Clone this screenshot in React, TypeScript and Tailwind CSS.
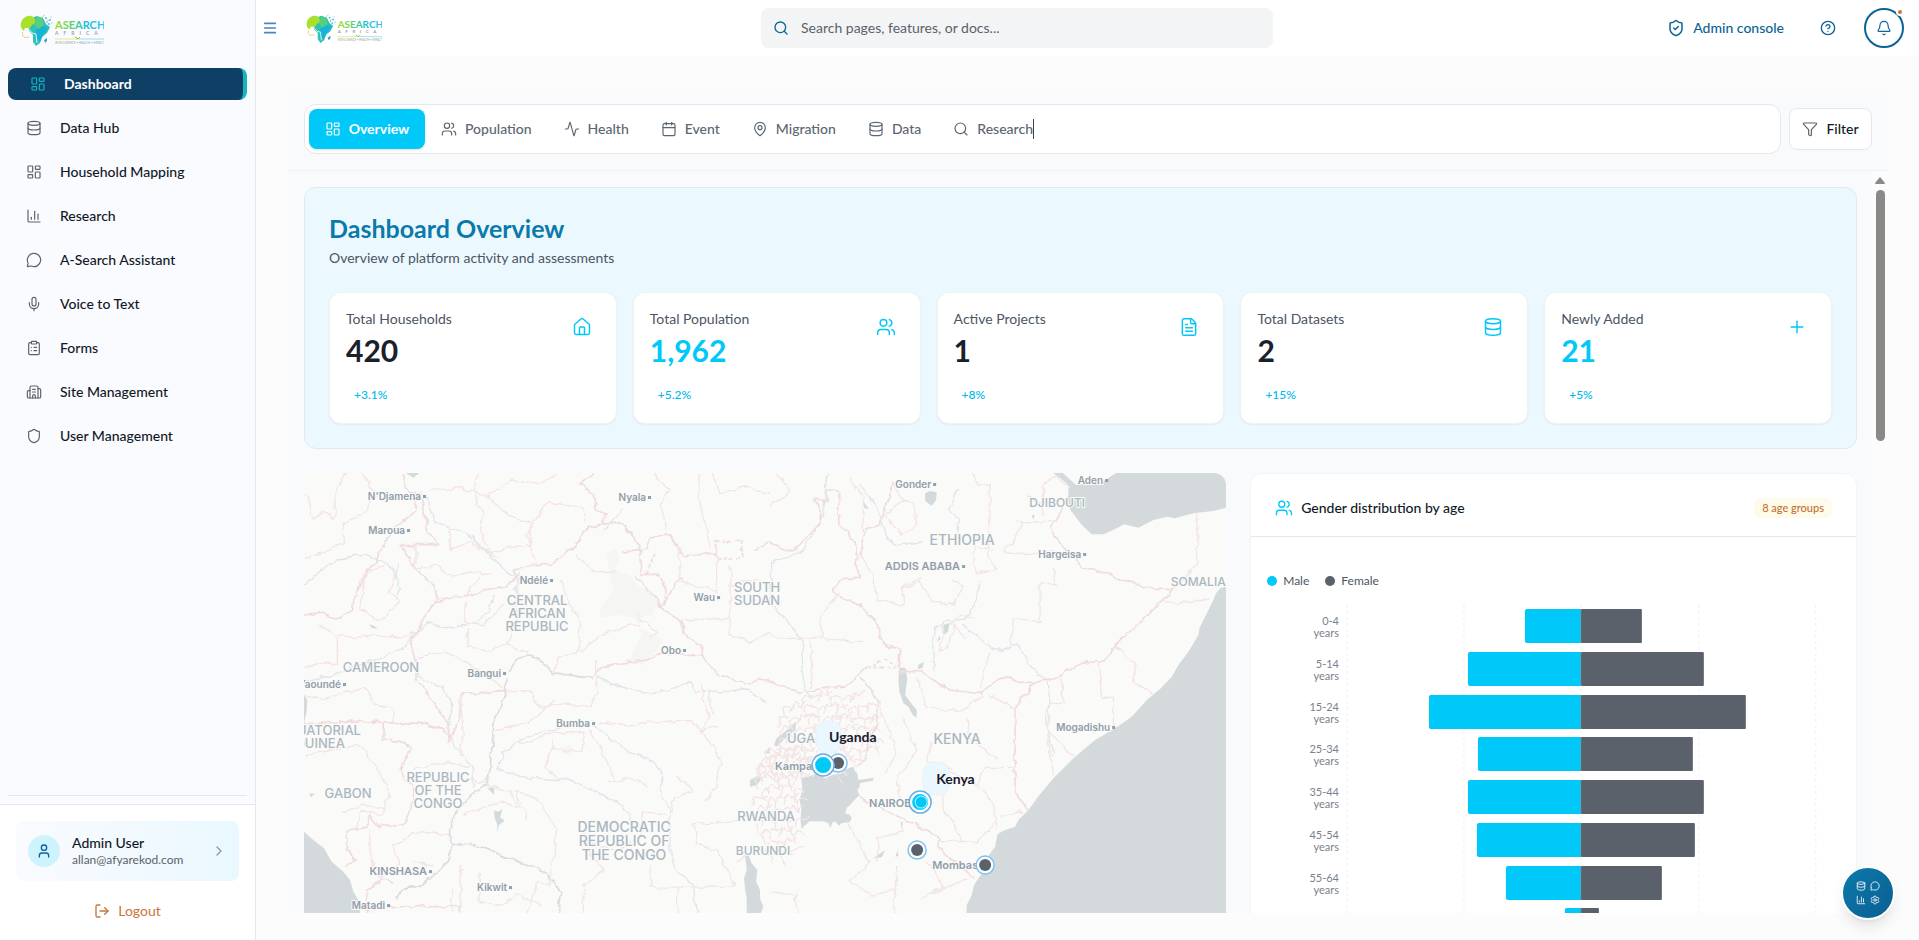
import type { LucideIcon } from 'lucide-react';
import {
    Activity, Bell, Building2, Calendar, ChartColumn, ChevronRight, CircleQuestionMark, ClipboardList, Database,
    FileText, Funnel, House, LayoutDashboard, LogOut, MapPin, Menu, MessageCircle, Mic, Plus, Search,
    Settings, Shield, ShieldCheck, User, Users,
} from 'lucide-react';

const navItems: { label: string; icon: LucideIcon }[] = [
    { label: 'Data Hub', icon: Database },
    { label: 'Household Mapping', icon: LayoutDashboard },
    { label: 'Research', icon: ChartColumn },
    { label: 'A-Search Assistant', icon: MessageCircle },
    { label: 'Voice to Text', icon: Mic },
    { label: 'Forms', icon: ClipboardList },
    { label: 'Site Management', icon: Building2 },
    { label: 'User Management', icon: Shield },
];

const tabs: { label: string; icon: LucideIcon }[] = [
    { label: 'Population', icon: Users },
    { label: 'Health', icon: Activity },
    { label: 'Event', icon: Calendar },
    { label: 'Migration', icon: MapPin },
    { label: 'Data', icon: Database },
];

const stats: { label: string; value: string; change: string; icon: LucideIcon; accent?: boolean }[] = [
    { label: 'Total Households', value: '420', change: '+3.1%', icon: House },
    { label: 'Total Population', value: '1,962', change: '+5.2%', icon: Users, accent: true },
    { label: 'Active Projects', value: '1', change: '+8%', icon: FileText },
    { label: 'Total Datasets', value: '2', change: '+15%', icon: Database },
    { label: 'Newly Added', value: '21', change: '+5%', icon: Plus, accent: true },
];

const ageGroups = [
    { range: '0-4', male: 56, female: 61 },
    { range: '5-14', male: 113, female: 123 },
    { range: '15-24', male: 152, female: 165 },
    { range: '25-34', male: 103, female: 112 },
    { range: '35-44', male: 113, female: 123 },
    { range: '45-54', male: 104, female: 114 },
    { range: '55-64', male: 75, female: 81 },
    { range: '65+', male: 16, female: 18 },
];

// city dots, label sits to the left
const cities = [
    { name: "N'Djamena", x: 120, y: 23 },
    { name: 'Maroua', x: 104, y: 57 },
    { name: 'Nyala', x: 345, y: 24 },
    { name: 'Ndélé', x: 247, y: 107 },
    { name: 'Wau', x: 414, y: 124 },
    { name: 'Obo', x: 380, y: 177 },
    { name: 'Bangui', x: 200, y: 200 },
    { name: 'Yaoundé', x: 40, y: 211 },
    { name: 'Bumba', x: 289, y: 250 },
    { name: 'Kikwit', x: 206, y: 414 },
    { name: 'Matadi', x: 84, y: 432 },
    { name: 'Gonder', x: 630, y: 11 },
    { name: 'Aden', x: 802, y: 7 },
    { name: 'Hargeisa', x: 780, y: 81 },
    { name: 'Mogadishu', x: 809, y: 254 },
];

const capitals = [
    { name: 'KINSHASA', x: 126, y: 398 },
    { name: 'ADDIS ABABA', x: 659, y: 93 },
];

const countries = [
    { lines: ['CENTRAL', 'AFRICAN', 'REPUBLIC'], x: 233, y: 132, size: 13 },
    { lines: ['CAMEROON'], x: 77, y: 199, size: 13 },
    { lines: ['EQUATORIAL', 'GUINEA'], x: 16, y: 262, size: 13 },
    { lines: ['REPUBLIC', 'OF THE', 'CONGO'], x: 134, y: 309, size: 13 },
    { lines: ['GABON'], x: 44, y: 325, size: 13 },
    { lines: ['DEMOCRATIC', 'REPUBLIC OF', 'THE CONGO'], x: 320, y: 359, size: 14 },
    { lines: ['SOUTH', 'SUDAN'], x: 453, y: 119, size: 13 },
    { lines: ['ETHIOPIA'], x: 658, y: 72, size: 14 },
    { lines: ['DJIBOUTI'], x: 753, y: 34, size: 12 },
    { lines: ['SOMALIA'], x: 894, y: 113, size: 12 },
    { lines: ['KENYA'], x: 653, y: 271, size: 14 },
    { lines: ['UGA'], x: 497, y: 270, size: 13 },
    { lines: ['RWANDA'], x: 462, y: 348, size: 13 },
    { lines: ['BURUNDI'], x: 459, y: 382, size: 12 },
];

// small districts, drawn as a jittered brick lattice inside an ellipse
function districtPath(cx: number, cy: number, rx: number, ry: number, step: number) {
    let d = '';
    for (let row = 0, y = cy - ry; y <= cy + ry; y += step, row++) {
        for (let x = cx - rx + (row % 2) * (step / 2); x <= cx + rx; x += step) {
            if (((x - cx) / rx) ** 2 + ((y - cy) / ry) ** 2 > 1) continue;
            const j = Math.round(Math.sin(x * 12.9 + y * 78.2) * step * 0.4);
            d += `M${Math.round(x)} ${Math.round(y + j)}l${step / 2} ${-j}l${step / 2} ${j}M${Math.round(x)} ${Math.round(y + j)}l${j} ${step}`;
        }
    }
    return d;
}

function Logo({ className }: { className: string }) {
    return (
        <svg viewBox="0 0 84 32" className={className} role="img" aria-label="ASearch Africa">
            <defs>
                <linearGradient id="word" x1="0" x2="1">
                    <stop offset="0" stopColor="#a6dc2c" />
                    <stop offset="0.4" stopColor="#4fcf7b" />
                    <stop offset="0.6" stopColor="#22bfd0" />
                    <stop offset="1" stopColor="#2fc4f5" />
                </linearGradient>
            </defs>
            <path d="M9 5l8-3 6 2 3 6 4 3-3 6-5 4-2 6-4 3-3-4 0-7-4-4-1-7z" fill="#2fc3b4" />
            <path d="M1 9C2 4 7 1 11 2c4 1 5 4 4 7l-3 2-2 3-5 0-1 3C1 15 0 12 1 9z" fill="#a9e02b" />
            <path d="M17 3l5 1 2 7-6 4-4-5z" fill="#59cf7d" />
            <path d="M16 16l8-4 4 2-5 7-3 7-4-5z" fill="#17b2dc" />
            <path d="M8 14l4 5 4 1 1 9" fill="none" stroke="#d9f5ef" strokeWidth="1" />
            <path d="M3 18c-2 3 1 7 6 5M22 3l3-2M27 6l2 1" fill="none" stroke="#f4c862" strokeWidth="1" />
            <path d="M24 26l3-2 0 3-2 2z" fill="#3b9fe0" />
            <g fill="#45bdf1">
                <circle cx="26" cy="4" r="1" /><circle cx="30" cy="6" r="1" /><circle cx="29" cy="10" r="1" />
                <circle cx="32" cy="9" r="0.6" /><circle cx="27" cy="8" r="0.8" /><circle cx="31" cy="3" r="0.6" />
            </g>
            <text x="35" y="15" fill="url(#word)" fontSize="11" fontWeight="700">ASEARCH</text>
            <text x="35" y="21" fill="#9ba3ab" fontSize="5" fontWeight="700" letterSpacing="5">AFRICA</text>
            <path d="M35 25h24" stroke="#dbe86a" strokeWidth="0.8" />
            <path d="M59 25h25" stroke="#7fd6ee" strokeWidth="0.8" />
            <path d="M55 23l3 2 2-2" stroke="#79c943" strokeWidth="1" fill="none" />
            <text x="35" y="30" fill="#9ba3ab" fontSize="3">INTELLIGENCE • HEALTH • IMPACT</text>
        </svg>
    );
}

function Sidebar() {
    return (
        <aside className="flex w-64 shrink-0 flex-col border-r border-[#e5e7eb] bg-[#fafbfe]">
            <div className="flex h-[60px] items-center px-5">
                <Logo className="h-8 w-[84px]" />
            </div>
            <nav className="mx-2 flex flex-1 flex-col gap-3 border-b border-[#e5e7eb] pt-2">
                <a href="#dashboard" className="flex h-8 items-center gap-[18px] rounded-lg border-r-4 border-[#14b5c1] bg-[#0d4064] px-[22px] text-sm font-bold text-white">
                    <LayoutDashboard size={16} strokeWidth={1.75} className="text-[#14b5c1]" />
                    Dashboard
                </a>
                {navItems.map(({ label, icon: Icon }) => (
                    <a key={label} href="#" className="flex h-8 items-center gap-[18px] px-[18px] text-sm font-medium text-[#111827]">
                        <Icon size={16} strokeWidth={1.75} className="text-[#5b616a]" />
                        {label}
                    </a>
                ))}
            </nav>
            <div className="mt-2 flex flex-col gap-3 border-t border-[#e5e7eb] bg-white p-4 pb-[11px]">
                <button className="flex h-[60px] items-center gap-3 rounded-lg bg-linear-to-r from-[#fafbfe] to-[#e9f8ff] px-3 text-left">
                    <span className="flex size-8 items-center justify-center rounded-full bg-[#cdf3fd] text-[#0b6396]">
                        <User size={16} />
                    </span>
                    <span className="flex-1">
                        <span className="block text-sm leading-[18px] font-medium text-[#111827]">Admin User</span>
                        <span className="block text-xs leading-4 text-[#5b616a]">allan@afyarekod.com</span>
                    </span>
                    <ChevronRight size={16} className="text-[#9097a1]" />
                </button>
                <button className="flex h-9 items-center justify-center gap-2 text-sm text-[#c97539]">
                    <LogOut size={16} />
                    Logout
                </button>
            </div>
        </aside>
    );
}

function Header() {
    return (
        <header className="flex h-14 shrink-0 items-center bg-white pr-[15px] pl-1.5">
            <div className="flex w-[499px] items-center gap-7">
                <button aria-label="Toggle menu" className="text-[#4a83c0]"><Menu size={16} strokeWidth={2.5} /></button>
                <Logo className="h-[29px] w-[76px]" />
            </div>
            <label className="flex h-10 w-lg items-center gap-3 rounded-lg bg-[#f3f4f6] px-3 text-[#0b6396]">
                <Search size={16} />
                <input type="search" aria-label="Search" placeholder="Search pages, features, or docs..." className="flex-1 bg-transparent text-sm text-[#111827] outline-none placeholder:text-[#5b616a]" />
            </label>
            <div className="flex flex-1 items-center justify-end text-[#0b6396]">
                <a href="#admin" className="flex items-center gap-2 text-sm font-medium"><ShieldCheck size={18} />Admin console</a>
                <button aria-label="Help" className="ml-6 flex size-10 items-center justify-center"><CircleQuestionMark size={16} /></button>
                <button aria-label="Notifications" className="relative ml-4 flex size-10 items-center justify-center rounded-full border-2 border-[#0b6396]">
                    <Bell size={16} strokeWidth={1.75} />
                    <span className="absolute -top-0.5 -right-0.5 size-2 rounded-full border-2 border-white bg-[#c97539]" />
                </button>
            </div>
        </header>
    );
}

function TabBar() {
    return (
        <div className="flex items-center gap-2 border-b border-[#f1f2f5] p-4">
            <div role="tablist" className="flex h-[50px] flex-1 items-center rounded-xl border border-[#e5e7eb] bg-white p-1">
                <button role="tab" aria-selected="true" className="flex h-10 w-[116px] items-center justify-center gap-2 rounded-lg bg-[#00c8f8] text-sm font-bold text-white shadow-sm">
                    <LayoutDashboard size={16} strokeWidth={1.75} />
                    Overview
                </button>
                {tabs.map(({ label, icon: Icon }) => (
                    <button key={label} role="tab" className="flex h-10 items-center gap-2 px-4 text-sm font-medium text-[#5b6673]">
                        <Icon size={16} strokeWidth={1.75} />
                        {label}
                    </button>
                ))}
                <button role="tab" className="flex h-10 items-center gap-2 px-4 text-sm font-medium text-[#5b6673]">
                    <Search size={16} strokeWidth={1.75} />
                    <span className="border-r border-[#374151]">Research</span>
                </button>
            </div>
            <button className="flex h-[42px] w-[83px] items-center justify-center gap-2 rounded-lg border border-[#e5e7eb] bg-white text-sm font-medium text-[#111827]">
                <Funnel size={16} strokeWidth={1.75} className="text-[#5b616a]" />
                Filter
            </button>
        </div>
    );
}

function Overview() {
    return (
        <section className="rounded-xl border border-[#e0e9ef] bg-[#ebf9ff] p-6">
            <h1 className="text-[25px] leading-8 font-bold text-[#0b7aab]">Dashboard Overview</h1>
            <p className="mt-1 text-sm text-[#4b5563]">Overview of platform activity and assessments</p>
            <div className="mt-6 grid grid-cols-5 gap-4">
                {stats.map(({ label, value, change, icon: Icon, accent }) => (
                    <div key={label} className="flex h-[132px] justify-between rounded-xl border border-[#f0f3f6] bg-white p-4 shadow-xs">
                        <div>
                            <div className="text-sm text-[#4b5563]">{label}</div>
                            <div className={accent ? 'mt-[3px] text-3xl font-bold text-[#00c8f8]' : 'mt-[3px] text-3xl font-bold text-[#1a202c]'}>{value}</div>
                            <div className="mt-[15px] px-2 py-1 text-xs font-medium text-[#00b8ec]">{change}</div>
                        </div>
                        <div className="p-2 text-[#00c8f8]"><Icon size={20} strokeWidth={1.75} /></div>
                    </div>
                ))}
            </div>
        </section>
    );
}

function Pin({ x, y, big }: { x: number; y: number; big?: boolean }) {
    return (
        <g>
            <circle cx={x} cy={y} r={big ? 11 : 9} fill="#fff" stroke={big ? '#69ade6' : '#7cc4f0'} strokeWidth="1.5" />
            <circle cx={x} cy={y} r={big ? 8 : 6} fill={big ? '#00c8f8' : '#5b616a'} />
        </g>
    );
}

function RegionMap() {
    return (
        <div className="col-span-3 h-[520px] overflow-hidden rounded-xl bg-[#fafaf8]">
            <svg viewBox="0 0 922 520" preserveAspectRatio="xMidYMin slice" className="size-full" role="img" aria-label="Map of project sites in East and Central Africa">
                <defs>
                    <filter id="rough" x="-5%" y="-5%" width="110%" height="110%">
                        <feTurbulence type="fractalNoise" baseFrequency="0.09" numOctaves="3" seed="4" />
                        <feDisplacementMap in="SourceGraphic" scale="7" xChannelSelector="R" yChannelSelector="G" />
                    </filter>
                </defs>
                {/* traced at three units to the pixel */}
                <g transform="translate(-4 -8) scale(0.3333)">
                    <g fill="#f5f5f4">
                        <path d="M920 270l25-20 15 25-15 40 50 20 20 30 40 10 20 35-20 40-30 5-10 30 60 30 15 15-30 40-30 30-45-5 40-90-20-45-45-10-60 10 0-30 40-50z" />
                        <path d="M780 850l30-10 15 15-20 22z" />
                    </g>
                    <g fill="#d4dadc">
                        <path d="M12 1100l28 25 32 25 23 40 35 30 20 25 10 35 18 30 2 34v300H12zM12 690l10 15-2 35-8 35z" />
                        <path d="M1335 1170l10 0 10 25 17 20-4 35 12 25 0 25 10 25-10 25 20 60-60 0 0-110-5-30-3-30 8-25zM1350 945l25-13 13 6-18 22-20 5zM1392 865l18-20 0 20z" />
                        <path d="M582 1036l12 4 13-7-7 24 14 10-18 14-4 26 0-28-8-20zM562 968l20 0 0 22zM208 478l15 5 10 10-18-5zM318 24h40l-18 14zM28 985l17 2-14 10z" />
                        <g transform="translate(1410 0)">
                            <path d="M1368 365l-18 5-12 15-8 20-25 50-17 35-3 20-30 50-30 40-20 35-35 37-40 33-45 50-50 35-60 35-65 55-60 60-42 50-33 45-30 30-10 20-35 12-18 11-7 37-25 35-10 40-15 20-13 20-7 30-15 30-5 200h783z" />
                            <path d="M850 24l20 16 25 20 0 30-10 20 20 30 30 40 30 28 35 0 30-13 32-17 43 10 45-23 40-10 25 5 55-15 60-7 38-10V24h-330l-40 26-80 10-40-36z" />
                            <path d="M115 935l25-10 25 15 22-10 28-5 12-12 23-8 3 12 9 8 3 20 18-2 27-5-2 10-20 2-18 5-2 12-6 8 6 15-12 12-16 18-10 8-5 17 14 4 6 10-5 12-25 3-8 8-12-13-7 3-8 17-5-15-15-5-30 0-12 0-8 8-8 7-7 8-4-28 3-30-5-30 8-30-3-35z" />
                            <path d="M388 608l17 0 7 32-7 50 15 20 20 25 0 23-12-8-13-25-15-10-12-35-3-35zM78 770l-2 25-36 30-20 20-8-5 8-20 30-25zM465 85l15-7 20 4-2 23-13 17-20-14zM520 480l18-6-4 26-14 10zM500 530l8-18 4 10zM445 600l16-10-4 20-14 2zM310 1180l35-25-10 22zM375 1175l8-18 2 16zM392 1070l6 0-2 30zM282 112l14 20-14-4zM784 150l10 0-4 14z" />
                        </g>
                    </g>
                </g>
                <g filter="url(#rough)">
                    <g transform="translate(-4 -8) scale(0.3333)" fill="none" strokeLinejoin="round">
                        <g stroke="#e1e5ea" strokeWidth="4">
                            <path d="M362 80l28 30 10 55 50 25 50 15 60 60 50 50 40 20M12 360l40-35 60-40 80-15 60 20 30 30 20 50-20 40M655 320l-10 60 20 10M330 510l60-40 30 20 80-10 60-30 25-60M12 650l80-20 140-50 80-30 40-50M350 630l80 40 25 50-10 60M445 810l40 60 35 40 0 60M890 640l60 20 110 25 80-20 30-15 20 30 150-5 60 40M880 780l90 70 90 40 25 30 0 70 25 50 0 120 20 60 50 40 10 104M590 910l100 30 120 5 110 50 60 40 15 50M590 915l20-55 80-50 90-20" />
                            <path stroke="#dadcdf" strokeWidth="5" d="M625 620l25-35 40-12 40 20 30 30 120 18M617 640l0 50-35 80-10 120-15 70-60 40-45 80 0 100-35 40-50 40-60 10-25 30M455 1135l70 5 70 25 140 55 50 60-10 64" />
                            <path d="M1580 25l-10 130-60 100-100 40M1415 290l-5 120 60 70 40 50-5 110 30 60M1900 615l-2-120 40-25 60-5 30-60 10-60M1990 480l90 75 40 0 30-20 50 80 40 30 10 60-15 60 25 110M1975 75l-30 60 30 25 0 60M1680 60l60 90 20 70 30 20 80-10" />
                        </g>
                        <g stroke="#f0dcde" strokeWidth="5">
                            <path d="M310 24l8 45 45 30 15 60 0 30 35 50-110 0 35 60 60 60 15 40-30 40-40 70-10 30 15 60 0 40 55 80 20 25 20 30 5 60M347 90l0 45-60 50-35 50-25 55-45 60-25 80-50 35-40-20-55 5-12 15" />
                            <path d="M405 410l60-10 45-10 40-15 70-10 30-30-10-20 60-12 50-5 60-45 60-65 50-15 45 5 30 30 30 50-5 70 55 0 20 50-10 40 60-80M885 24l-45 30 40 35 5 40 30 20-5 30M963 262l75-12 18-35 55-5 20 40 30 22 90-8M1360 255l50-20M1005 330l60 60 10 30 70 50 5 40 55 30 5 40 50 50 90 30 30-20 30 10M1210 570l-130-5-40 20-80 10-50 10-28 30M12 775l108 0 0-8 130 6 110 2 60 15 28 20 30-50 5-75 135-5M250 775l-2 50 70 5 15 25-35 60 40 50-5 70-15 40-80 10-30-35-10 40-60 5 5 60 20 30-20 20M200 1344l0-70 50-30 30 10M265 1325l215 0 0 19" />
                        </g>
                        <g stroke="#f0dcde" strokeWidth="5" transform="translate(1410 0)">
                            <path d="M0 230l40 25 35 0 75-80 0-55-20-17 38 0 3-25 35 0 0 100 50 55 10 110-55 0-20 40 80 40 55 55 0 35 25 30 40 10 0 60M390 620l60 0 90 55 95 12 30-30 55-25 25 20 50 0 65-15 60-40 85-10 35-50 170-160 0 0-65-2-120-45-90-25-80-90-10-30 40-60M795 655l-60 75 0 250 40 55M265 995l250 125-10 30 110 90M120 680l60-20 45 10 60-60M270 640l50 60 0 80-30 60 0 40-30 25M370 50l-40 130-40 10-20 80M0 650l40 20 60 10" />
                            <path strokeDasharray="12 8" d="M285 608l60-25 40 25zM-165 227l80 0 0 55-75 0zM-370 330l25-70" />
                        </g>
                        <g stroke="#f3e4e5" strokeWidth="4">
                            <path d="M140 24l-35 60 0 80-40-25-30 30-10-60-13-20M180 24l50 60-40 60-60 30 0 60-60 30-58 10M12 610l50-20 50 10 0-80-50-40M115 515l210 0M300 300l-30 80 30 30-60 60-60-40 10-100 60-30M345 230l0 80 60-10 50 40 60-20 60 10M450 190l0 60 60-20 80 50M400 400l90 0 50-60M500 410l-10 60 60 10 60-60M505 490l0 50 60 20 50-20M350 580l90-20 60 30 110 80M540 24l-20 60 30 60-10 60 30 60 120-30 0-60-80-30-40-50M390 80l80-15 90 30 80-50 80 10 50-30M710 300l-30-90 60-100 110 20 10 40M820 260l60 60 70 0M650 350l0 130-30 60 60 20 0 20M780 340l20 60 40 80-5 80-60 20-20 50M840 560l60-50 90-30 30 0M1050 520l20-20-60-50M970 130l-60 70M1060 24l50 50-30 50 20 80M1200 24l0 90 30 140M1140 250l0 100 110 30 0-130M1150 465l140-5 0-160M1290 460l0 50 60 20 60-30M1290 360l80-20" />
                            <path d="M12 690l60 10 80-20 50-10 20 50 60 10 0 40M480 690l10 120-10 60M620 680l70 0 30 50 60-15 90 10 20-40 0-100M585 795l100-20 80-70M660 820l0 20 100-40 0 40-20 60M765 800l90 0-10 60-90-10-20 60 40 30M870 800l50 80 20 60M890 770l100 10 60-10 130 0 20 30 60-20M1200 660l30 100-30 40 40 40 20 50-10 80-40 40M1130 930l50 50-60 20-10 50M1220 670l20 80M12 870l60-10 110-20 60 90 30 60-30 60-60-10-10 60M130 1040l60-20 60 10M510 910l-60-20-110 20M510 940l120 40 30 50-60-20-110 40M680 1060l-30-80 60 20 60 90-10 100-10 70-40-10-30 120M840 1130l110 30 80-60 0-60 70 10M870 1160l40 60-60 40 0 84M1050 1200l0 66 260 0-60-110-60-20-10-60 130-10M1130 1266l0 78M480 1200l0 144M455 1270l0 74M540 1220l0 90 60 10 50-30 70 30M210 1100l0 80 30 60 60-40-20-60 80-40 90 10M340 1190l60 10M920 950l60-10 60 20M1310 1190l60-40 40 10M1240 24l20 60 80-20 70 20" />
                        </g>
                        <g stroke="#f3e4e5" strokeWidth="4" transform="translate(1410 0)">
                            <path d="M20 24l40 60-60 40M240 40l40 60 0 100M370 50l30 60-60 40 60 60 40-30-10-60-40-20M610 24l10 40 40-10 0 100-10 120 30 40-60 10-10-80 60 10M760 170l-30 60-30 30 50 10 100-10M740 170l120 0M850 310l10 50-50-10 0 120-80-10-5 80M550 350l30 10-30 60-60-10-40-60-60 20M270 270l40 60 10 80 80 10 0-60 60-20M210 380l-60 80 5 60M0 500l20 20 130 0 130 10M125 530l0 140M540 480l30-30 40 10M520 480l-10 80 30-20 10-60 40 40M660 560l-30 110M440 640l30 90 100 10 70-50M590 760l10 60 80 60M735 730l0 60M660 690l70 40M870 640l10 75-40 0-10 90 20 120M830 790l80 90M985 590l10 110 35 0 0 80M1035 545l60 50 0 60 55 35M1180 410l80 5 60-10M1280 150l0 150-70 80M730 910l-90 0-20 50 50 50 10 80M690 1055l70-20M620 960l-110-60 10 130 60 100 40 0 60-60M400 760l40 100-60 80 10 60M480 830l-10 60 80 20M320 700l60 160-30 60M510 1130l70 0M400 1100l-80 20 0 70M470 1190l60 80-80 30M380 1200l-10 144M600 1240l-110 40M0 1280l80 10 0 60M230 1070l70 120-60 60M240 1250l60 40 80-20M100 1150l-100 20M850 30l-30 30 0 90M820 120l-50-30M850 30l50 40" />
                            <path d={districtPath(170, 790, 160, 130, 32)} />
                            <path d={districtPath(40, 890, 90, 60, 24)} />
                            <path d={districtPath(20, 1010, 80, 170, 32)} />
                        </g>
                    </g>
                </g>
                <g fontWeight="500" fill="#abb7c0" textAnchor="middle" stroke="#fafaf8" strokeWidth="2" paintOrder="stroke" className="font-[Inter,sans-serif]">
                    {countries.map(({ lines, x, y, size }) => lines.map((line, i) => (
                        <text key={line + x} x={x} y={y + i * (size > 13 ? 14 : 13)} fontSize={size}>{line}</text>
                    )))}
                </g>
                <g fontSize="10" fontWeight="600" fill="#929eaa" stroke="#fafaf8" strokeWidth="2" paintOrder="stroke" className="font-[Inter,sans-serif]">
                    {cities.map(({ name, x, y }) => <text key={name} x={x - 3} y={y + 4} textAnchor="end">{name}</text>)}
                    {capitals.map(({ name, x, y }) => <text key={name} x={x - 3} y={y + 4} fontSize="11" textAnchor="end">{name}</text>)}
                    <text x="471" y="297" fontSize="11">Kampala</text>
                    <text x="565" y="334" fontSize="11">NAIROBI</text>
                    <text x="628" y="396" fontSize="11">Mombasa</text>
                </g>
                <g fill="#929eaa">
                    {[...cities, ...capitals].map(({ name, x, y }) => <rect key={name} x={x - 1} y={y - 1} width="3" height="3" />)}
                </g>
                <g fill="#ebf7fe" stroke="#deeaf2" strokeWidth="0.5">
                    <rect x="512" y="248" width="25" height="32" rx="10" />
                    <rect x="619" y="289" width="26" height="33" rx="10" />
                </g>
                <Pin x={534} y={290} />
                <Pin x={519} y={292} big />
                <Pin x={616} y={329} big />
                <circle cx="617" cy="329" r="6" fill="none" stroke="#b9effc" strokeWidth="1" />
                <Pin x={613} y={377} />
                <Pin x={681} y={392} />
                <g fontSize="14" fontWeight="700" fill="#1a1a2e">
                    <text x="525" y="269">Uganda</text>
                    <text x="632" y="311">Kenya</text>
                </g>
            </svg>
        </div>
    );
}

function GenderChart() {
    return (
        <section className="col-span-2 rounded-xl border border-[#f4f5f8] bg-white">
            <div className="flex h-[63px] items-center justify-between border-b border-[#e5e7eb] px-6 pt-1.5">
                <h2 className="flex items-center gap-2 text-sm font-medium text-[#111827]">
                    <Users size={18} strokeWidth={1.75} className="text-[#00c8f8]" />
                    Gender distribution by age
                </h2>
                <span className="rounded-md bg-[#fffbeb] px-2 py-0.5 text-[11px] leading-4 font-medium text-[#c07233]">8 age groups</span>
            </div>
            <div className="px-4 pt-9">
                <div className="flex h-4 gap-4 text-xs text-[#4b5563]">
                    <span className="flex items-center gap-1.5"><span className="size-2.5 rounded-full bg-[#00c8f8]" />Male</span>
                    <span className="flex items-center gap-1.5"><span className="size-2.5 rounded-full bg-[#5b616a]" />Female</span>
                </div>
                <svg viewBox="0 0 573 360" className="mt-4 w-full" role="img" aria-label="Male and female counts by age group">
                    {[80, 197, 314, 432, 549].map((x) => (
                        <line key={x} x1={x} x2={x} y1="0" y2="360" stroke="#eef0f2" strokeDasharray="3 3" />
                    ))}
                    {ageGroups.map(({ range, male, female }, i) => {
                        const y = 4 + Math.round(i * 42.75);
                        return (
                            <g key={range}>
                                <path d={`M314 ${y}h${2 - male}q-2 0-2 2v30q0 2 2 2h${male - 2}z`} fill="#00c8f8" />
                                <rect x="314" y={y} width={female} height="34" rx="1" fill="#5b616a" />
                                <line x1="314" x2="314" y1={y} y2={y + 34} stroke="#7b8790" strokeDasharray="2 2" />
                                <g fontSize="11" fill="#7b818c" textAnchor="end">
                                    <text x="72" y={y + 16}>{range}</text>
                                    <text x="72" y={y + 28}>years</text>
                                </g>
                            </g>
                        );
                    })}
                </svg>
            </div>
        </section>
    );
}

export default function App() {
    return (
        <div className="flex h-screen overflow-hidden bg-[#fcfcfd] font-[Lato,sans-serif]">
            <Sidebar />
            <div className="flex min-w-0 flex-1 flex-col">
                <Header />
                <main className="flex min-h-0 flex-1 flex-col p-8 pr-[31px] pb-[27px]">
                    <div className="flex min-h-0 flex-1 flex-col bg-[#f9fafc]">
                        <TabBar />
                        <div className="flex min-h-0 flex-1">
                            <div className="flex min-w-0 flex-1 flex-col gap-6 overflow-hidden p-4 pr-[15px]">
                                <Overview />
                                <div className="grid grid-cols-5 gap-6">
                                    <RegionMap />
                                    <GenderChart />
                                </div>
                            </div>
                            {/* scroll track */}
                            <div className="flex w-4 flex-col items-center gap-1.5 bg-[#fcfcfc] pt-1.5">
                                <svg viewBox="0 0 10 7" className="w-2.5"><path d="M5 0l5 6q0 1-1 1H1Q0 7 0 6z" fill="#8b8888" /></svg>
                                <div className="h-[251px] w-[9px] rounded-full bg-[#8b8888]" />
                            </div>
                        </div>
                    </div>
                </main>
            </div>
            <button aria-label="Quick actions" className="fixed right-6 bottom-5 grid size-[54px] grid-cols-2 place-content-center gap-1 rounded-full border-2 border-white bg-linear-to-br from-[#0b7aab] to-[#0b5f92] px-[13px] text-white shadow-lg">
                <Database size={10} /><MessageCircle size={10} />
                <ChartColumn size={10} /><Settings size={10} />
            </button>
        </div>
    );
}
